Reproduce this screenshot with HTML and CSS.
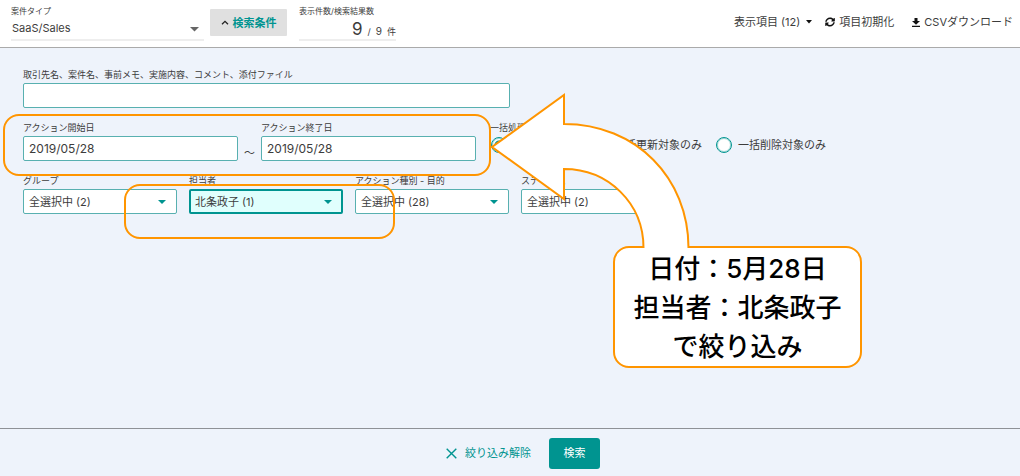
FILE: index.html
```html
<!DOCTYPE html>
<html lang="ja">
<head>
<meta charset="utf-8">
<meta name="viewport" content="width=device-width, initial-scale=1">
<title>案件検索</title>
<link rel="stylesheet" href="styles.css">
</head>
<body>
<header class="topbar">
  <div class="type">
    <label class="caption" for="type">案件タイプ</label>
    <div class="picker">
      <select id="type" class="type-select"><option>SaaS/Sales</option></select>
      <svg class="caret" width="9" height="5" viewBox="0 0 9 5"><path d="M0 0h9L4.500 4.500z"/></svg>
    </div>
  </div>
  <button class="toggle" type="button" aria-expanded="true">
    <svg width="8" height="5" viewBox="0 0 8 5"><path d="M1 4.300 4 1.300l3 3" fill="none" stroke="#222" stroke-width="1.3"/></svg>
    検索条件
  </button>
  <div class="count">
    <span class="caption">表示件数/検索結果数</span>
    <p class="count-value"><span class="shown">9</span><span>/</span><span class="total">9</span><span>件</span></p>
  </div>
  <nav class="tools">
    <button class="tool columns" type="button">表示項目 (12)
      <svg width="6" height="4" viewBox="0 0 6 4"><path d="M0 0h6L3 3.500z"/></svg>
    </button>
    <button class="tool" type="button">
      <svg width="10" height="10" viewBox="0 0 512 512"><path d="M371 156c-31-31-72-48-116-48-78 0-146 54-165 129-1 6-6 9-12 9H24c-7 0-13-7-12-14C33 117 134 24 256 24c66 0 127 26 171 69l36-36c15-15 41-4 41 17v134c0 13-11 24-24 24H346c-21 0-32-26-17-41zM32 280h134c21 0 32 26 17 41l-42 42c31 29 72 45 115 45 78 0 146-53 165-129 1-6 6-9 12-9h55c8 0 13 7 12 14-21 115-122 204-244 204-66 0-127-26-171-69l-32 36c-15 15-41 4-41-17V304c0-13 7-24 20-24z"/></svg>
      項目初期化
    </button>
    <button class="tool download" type="button">
      <svg width="8" height="9" viewBox="0 0 8 9"><path d="M2.500 0h3v3H8L4 6.800 0 3h2.500zM0 7.800h8V9H0z"/></svg>
      CSVダウンロード
    </button>
  </nav>
</header>

<form class="page" id="search">
  <div class="panel">
    <div class="field keyword">
      <label for="keyword">取引先名、案件名、事前メモ、実施内容、コメント、添付ファイル</label>
      <input id="keyword" class="control" type="text">
    </div>
    <div class="row">
      <div class="dates">
        <div class="field">
          <label for="from">アクション開始日</label>
          <input id="from" class="control date" type="text" value="2019/05/28">
        </div>
        <span class="tilde">～</span>
        <div class="field">
          <label for="to">アクション終了日</label>
          <input id="to" class="control date" type="text" value="2019/05/28">
        </div>
      </div>
      <fieldset class="bulk">
        <legend>一括処理</legend>
        <div class="radios">
          <label class="radio"><input type="radio" name="bulk" aria-label="すべて" checked></label>
          <label class="radio"><input type="radio" name="bulk">一括更新対象のみ</label>
          <label class="radio"><input type="radio" name="bulk">一括削除対象のみ</label>
        </div>
      </fieldset>
    </div>
    <div class="filters">
      <div class="field">
        <label for="group">グループ</label>
        <div class="picker">
          <select id="group" class="control"><option>全選択中 (2)</option></select>
          <svg class="caret" width="8" height="4" viewBox="0 0 8 4"><path d="M0 0h8L4 4z"/></svg>
        </div>
      </div>
      <div class="field">
        <label for="owner">担当者</label>
        <div class="picker">
          <select id="owner" class="control active"><option>北条政子 (1)</option></select>
          <svg class="caret" width="8" height="4" viewBox="0 0 8 4"><path d="M0 0h8L4 4z"/></svg>
        </div>
      </div>
      <div class="field">
        <label for="purpose">アクション種別 - 目的</label>
        <div class="picker">
          <select id="purpose" class="control"><option>全選択中 (28)</option></select>
          <svg class="caret" width="8" height="4" viewBox="0 0 8 4"><path d="M0 0h8L4 4z"/></svg>
        </div>
      </div>
      <div class="field">
        <label for="status">ステータス</label>
        <div class="picker">
          <select id="status" class="control"><option>全選択中 (2)</option></select>
          <svg class="caret" width="8" height="4" viewBox="0 0 8 4"><path d="M0 0h8L4 4z"/></svg>
        </div>
      </div>
    </div>
  </div>
  <footer class="actions">
    <button class="clear" type="reset">
      <svg width="11" height="11" viewBox="0 0 11 11"><path d="M.7.7l9.600 9.600M10.300.7L.7 10.300" fill="none" stroke="currentColor" stroke-width="1.4"/></svg>
      絞り込み解除
    </button>
    <button class="submit" type="submit">検索</button>
  </footer>
</form>

<div class="mark mark-dates"></div>
<div class="mark mark-owner"></div>
<div class="callout">
  <p>日付：5月28日</p>
  <p>担当者：北条政子</p>
  <p>で絞り込み</p>
</div>
<svg class="arrow" width="200" height="158" viewBox="0 0 200 158">
  <path d="M153.500 158C153.500 113 118 79 74 79V109L2 57 74 5V34C146 34 198.500 88 198.500 158" fill="#fff" stroke="#ff9500" stroke-width="2"/>
</svg>
</body>
</html>
```
FILE: styles.css
```css
* { box-sizing: border-box; }

body {
  position: relative;
  display: flex;
  flex-direction: column;
  min-height: 100vh;
  margin: 0;
  background: #eef3fb;
  color: #3c3c3c;
  font: 11px/16px Inter, "Noto Sans CJK JP", sans-serif;
}

p { margin: 0; }
svg { display: block; flex: none; }

button, input, select {
  margin: 0;
  color: inherit;
  font: inherit;
}

button { border: 0; background: none; cursor: pointer; }

/* Top bar */
.topbar {
  display: flex;
  align-items: flex-start;
  height: 48px;
  padding: 5px 7px 0 11px;
  border-bottom: 1px solid #aaa;
  background: #fff;
}

.caption {
  display: block;
  font-size: 8px;
  line-height: 12px;
}

.type { width: 193px; }

.picker { position: relative; }

.caret {
  position: absolute;
  top: 50%;
  right: 11px;
  margin-top: -2px;
  fill: #009490;
  pointer-events: none;
}

.type-select {
  display: block;
  width: 100%;
  height: 24px;
  padding: 0 0 0 1px;
  border: 0;
  border-bottom: 2px solid #eee;
  appearance: none;
  background: none;
}

.type .caret { right: 5px; fill: #666; }

.toggle {
  display: flex;
  align-items: center;
  justify-content: center;
  gap: 4px;
  width: 77px;
  height: 27px;
  margin: 4px 12px 0 6px;
  padding: 0;
  border-radius: 1px;
  background: #e0e0e0;
  color: #009490;
  font-weight: 700;
}

.count { width: 97px; }
.count .caption { white-space: nowrap; }

.count-value {
  display: flex;
  align-items: baseline;
  justify-content: flex-end;
  gap: 5px;
  height: 24px;
  border-bottom: 2px solid #eee;
  font-size: 9px;
  line-height: 24px;
}

.shown { font-size: 17px; }
.total { font-size: 10px; }

.tools {
  display: flex;
  margin-left: auto;
  padding-top: 9px;
}

.tool {
  display: flex;
  align-items: center;
  gap: 4px;
  padding: 0;
  white-space: nowrap;
}

.tool svg { fill: #111; }
.columns { gap: 6px; margin-right: 13px; }
.download { margin-left: 18px; }

/* Search conditions */
.page {
  display: flex;
  flex: 1;
  flex-direction: column;
}

.panel {
  display: flex;
  flex: 1;
  flex-direction: column;
  gap: 14px;
  padding: 21px 23px;
}

.field {
  display: flex;
  flex-direction: column;
  gap: 2px;
  min-width: 0;
}

.field label, .bulk legend {
  padding: 0;
  font-size: 9px;
  line-height: 12px;
  white-space: nowrap;
}

.keyword { max-width: 487px; }

.control {
  display: block;
  width: 100%;
  height: 25px;
  padding: 0 5px;
  border: 1px solid #58b0b0;
  border-radius: 2px;
  appearance: none;
  background: #fff;
}

.control.active {
  border: 2px solid #009490;
  padding: 0 4px;
  background: #e0fffd;
}

.control.date { font-size: 12px; }

.row { display: flex; gap: 14px; }

.dates {
  display: flex;
  align-items: flex-end;
  width: 453px;
}

.dates .field { flex: 1; }

.tilde {
  width: 23px;
  text-align: center;
}

.bulk {
  min-width: 0;
  margin: 0;
  padding: 0;
  border: 0;
}

.radios {
  display: grid;
  grid-template-columns: 101px 124px auto;
  padding-top: 3px;
}

.radio {
  display: flex;
  align-items: center;
  gap: 6px;
  white-space: nowrap;
}

.radio input {
  width: 16px;
  height: 16px;
  margin-left: 1px;
  border: 1px solid #009490;
  outline: 1px solid #00949066;
  outline-offset: -2px;
  border-radius: 50%;
  appearance: none;
  background: #fff;
}

.radio input:checked {
  background: radial-gradient(circle, #009490 4px, #fff 5px);
}

.filters {
  display: grid;
  grid-template-columns: repeat(4, 1fr);
  gap: 12px;
  max-width: 652px;
}

/* Bottom actions */
.actions {
  display: flex;
  align-items: center;
  justify-content: center;
  height: 48px;
  padding-top: 1px;
  border-top: 1px solid #8e9196;
}

.clear {
  display: flex;
  align-items: center;
  gap: 8px;
  padding: 0 18px 0 26px;
  color: #009490;
}

.submit {
  width: 51px;
  height: 31px;
  padding: 0;
  border-radius: 3px;
  background: #009490;
  color: #fff;
}

/* Annotations laid over the screen */
.mark, .callout {
  position: absolute;
  border: 2px solid #ff9500;
  border-radius: 16px;
}

.mark { pointer-events: none; }

.mark-dates {
  top: 114px;
  left: 3px;
  width: 488px;
  height: 62px;
}

.mark-owner {
  top: 184px;
  left: 124px;
  width: 271px;
  height: 55px;
}

.callout {
  top: 246px;
  left: 613px;
  width: 249px;
  padding-top: 1px;
  background: #fff;
  color: #000;
  font-size: 26px;
  font-weight: 500;
  line-height: 39px;
  text-align: center;
}

.arrow {
  position: absolute;
  top: 90px;
  left: 490px;
  pointer-events: none;
}
```
